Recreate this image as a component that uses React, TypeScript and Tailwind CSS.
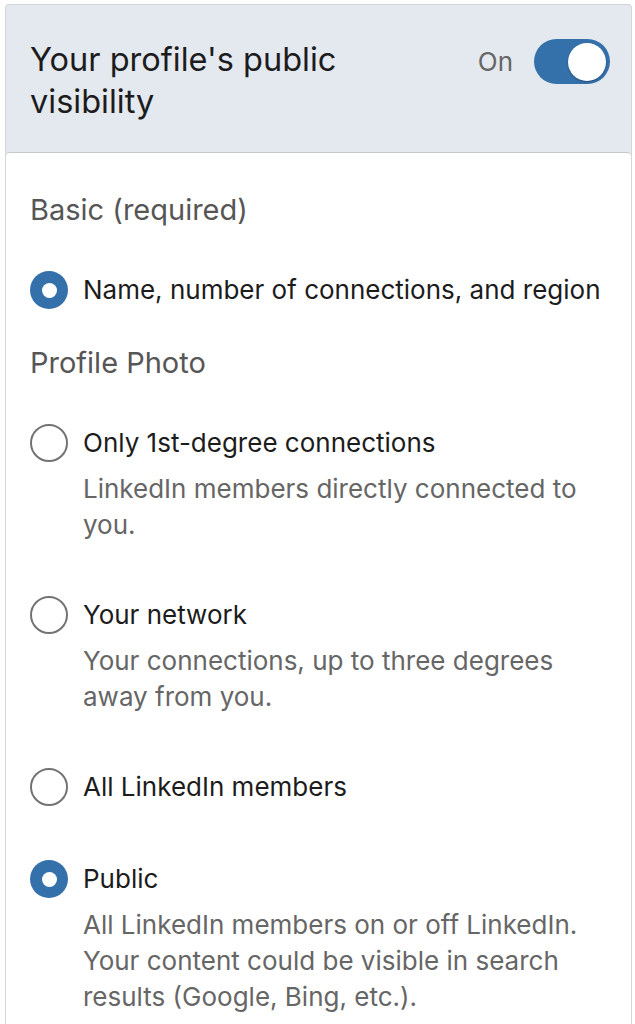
import { useState } from "react";

type Option = {
  id: string;
  label: string;
  desc?: string[];
};

const photoOptions: Option[] = [
  {
    id: "first",
    label: "Only 1st-degree connections",
    desc: ["LinkedIn members directly connected to", "you."],
  },
  {
    id: "network",
    label: "Your network",
    desc: ["Your connections, up to three degrees", "away from you."],
  },
  { id: "members", label: "All LinkedIn members" },
  {
    id: "public",
    label: "Public",
    desc: [
      "All LinkedIn members on or off LinkedIn.",
      "Your content could be visible in search",
      "results (Google, Bing, etc.).",
    ],
  },
];

function Radio({ checked }: { checked: boolean }) {
  return checked ? (
    <span className="flex h-[38px] w-[38px] shrink-0 items-center justify-center rounded-full bg-[#3470aa]">
      <span className="h-[15px] w-[15px] rounded-full bg-white" />
    </span>
  ) : (
    <span className="h-[38px] w-[38px] shrink-0 rounded-full border-2 border-[#737373] bg-white" />
  );
}

export default function App() {
  const [visible, setVisible] = useState(true);
  const [photo, setPhoto] = useState("public");

  return (
    <div className="min-h-screen bg-white pt-[4px] pl-[5px] pr-[3px] font-['Inter','Liberation_Sans',Arial,sans-serif]">
      <div className="overflow-hidden rounded-t-[4px] border border-b-0 border-[#d3d6da] bg-[#e4e8ef]">
        <header className="flex items-start justify-between pt-[34px] pr-[21px] pb-[29px] pl-[24px]">
          <h1 className="text-[32.5px] leading-[42px] text-[#1c1c1c]">
            Your profile's public
            <br />
            visibility
          </h1>
          <div className="flex items-center gap-[21px]">
            <span className="text-[26px] text-[#666666]">On</span>
            <button
              onClick={() => setVisible(!visible)}
              className="flex h-[45px] w-[76px] items-center rounded-full bg-[#3470aa] px-[4px]"
            >
              <span
                className={
                  visible
                    ? "ml-auto h-[38px] w-[38px] rounded-full bg-white shadow-[0_1px_2px_rgba(0,0,0,0.3)]"
                    : "h-[38px] w-[38px] rounded-full bg-white shadow-[0_1px_2px_rgba(0,0,0,0.3)]"
                }
              />
            </button>
          </div>
        </header>

        <div className="rounded-t-[4px] border-t border-[#c4c7cb] bg-white pt-[39px] pr-[20px] pb-[20px] pl-[24px]">
          <div className="text-[29px] leading-[36px] text-[#565656]">Basic (required)</div>

          <div className="mt-[43px] flex items-center gap-[15px]">
            <Radio checked />
            <span className="text-[26px] leading-[36px] text-[#1c1c1c]">
              Name, number of connections, and region
            </span>
          </div>

          <div className="mt-[36px] text-[29px] leading-[36px] text-[#565656]">Profile Photo</div>

          <div className="mt-[43px] flex flex-col">
            {photoOptions.map((o, i) => (
              <div
                key={o.id}
                onClick={() => setPhoto(o.id)}
                className={i === 0 ? "" : o.id === "public" ? "mt-[54px]" : "mt-[53px]"}
              >
                <div className="flex items-center gap-[15px]">
                  <Radio checked={photo === o.id} />
                  <span className="text-[26px] leading-[36px] text-[#1c1c1c]">{o.label}</span>
                </div>
                {o.desc && (
                  <div className="mt-[9px] pl-[53px] text-[26px] leading-[36px] text-[#666666]">
                    {o.desc.map((d) => (
                      <div key={d}>{d}</div>
                    ))}
                  </div>
                )}
              </div>
            ))}
          </div>
        </div>
      </div>
    </div>
  );
}
